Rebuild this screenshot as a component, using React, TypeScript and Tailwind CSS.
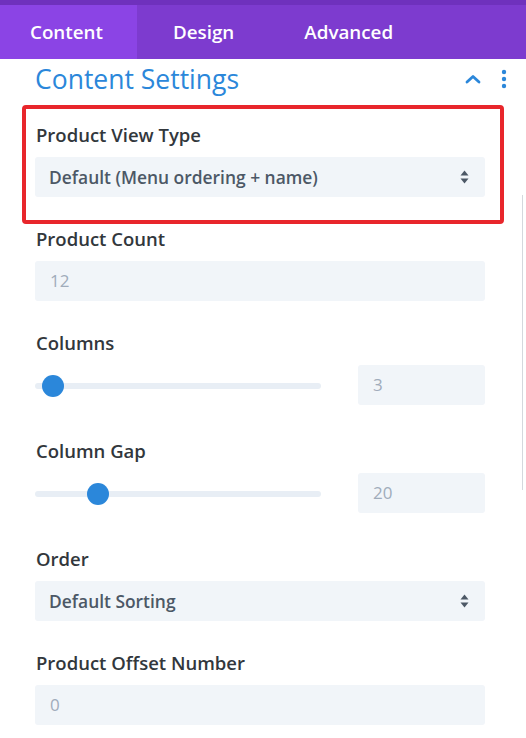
import React from 'react'

const font = { fontFamily: '"Open Sans", "Noto Sans", sans-serif' }

function Label({ children }: { children: React.ReactNode }) {
  return <div className="h-6 leading-6 text-[18.5px] font-semibold text-[#32373c] pl-[1px]">{children}</div>
}

function SelectBox({ value }: { value: string }) {
  return (
    <div className="mt-[10px] h-[40px] w-[450px] rounded-[3px] bg-[#f1f5f9] flex items-center justify-between pl-[14px] pr-[16px]">
      <span className="text-[17.4px] font-semibold text-[#4c5866]">{value}</span>
      <svg width="9" height="14" viewBox="0 0 9 14">
        <path d="M4.5 0.5 L8.5 5.5 H0.5 Z" fill="#4c5866" />
        <path d="M4.5 13.5 L8.5 8.5 H0.5 Z" fill="#4c5866" />
      </svg>
    </div>
  )
}

function InputBox({ value, wide = true }: { value: string; wide?: boolean }) {
  return (
    <div
      className={`h-[40px] rounded-[3px] bg-[#f1f5f9] flex items-center pl-[15px] text-[17px] text-[#a0acbb] ${
        wide ? 'w-[450px] mt-[10px]' : 'w-[127px]'
      }`}
    >
      {value}
    </div>
  )
}

function Slider({ value, pos }: { value: string; pos: number }) {
  return (
    <div className="mt-[10px] h-[40px] flex items-center">
      <div className="relative w-[286px] h-[6px] mt-[2px] rounded-full bg-[#e8eef5]">
        <div
          className="absolute top-1/2 w-[22px] h-[22px] -mt-[11px] -ml-[11px] rounded-full bg-[#2b87da]"
          style={{ left: pos }}
        />
      </div>
      <div className="ml-[37px]">
        <InputBox value={value} wide={false} />
      </div>
    </div>
  )
}

export default function App() {
  return (
    <div className="relative w-[526px] h-[738px] overflow-hidden bg-white" style={font}>
      {/* Tabs */}
      <div className="h-[5px] bg-[#6f31bd]" />
      <div className="h-[54px] flex bg-[#7d3bcf] text-[18.8px] font-semibold text-white">
        <div className="w-[137px] bg-[#8b44e5] flex items-center pl-[30px]">Content</div>
        <div className="flex items-center pl-[36px]">Design</div>
        <div className="flex items-center pl-[70px]">Advanced</div>
      </div>

      {/* Header */}
      <div className="h-[40px] flex items-center pl-[35px] pr-[19px]">
        <span className="text-[26.5px] text-[#2b87da] leading-8">Content Settings</span>
        <div className="ml-auto flex items-center">
          <svg width="16" height="10" viewBox="0 0 16 10" className="mr-[20px]">
            <path d="M2 8 L8 2.5 L14 8" fill="none" stroke="#2b87da" strokeWidth="2.8" strokeLinecap="round" strokeLinejoin="round" />
          </svg>
          <svg width="6" height="20" viewBox="0 0 6 20">
            <circle cx="3" cy="3" r="2.2" fill="#2b87da" />
            <circle cx="3" cy="10" r="2.2" fill="#2b87da" />
            <circle cx="3" cy="17" r="2.2" fill="#2b87da" />
          </svg>
        </div>
      </div>

      {/* Highlighted field */}
      <div className="ml-[22px] mt-[6px] w-[482px] h-[119px] border-4 border-[#e8262b] rounded-[4px] pl-[9px] pt-[14px]">
        <Label>Product View Type</Label>
        <SelectBox value="Default (Menu ordering + name)" />
      </div>

      <div className="pl-[35px]">
        <div className="mt-[3px]">
          <Label>Product Count</Label>
          <InputBox value="12" />
        </div>
        <div className="mt-[30px]">
          <Label>Columns</Label>
          <Slider value="3" pos={18} />
        </div>
        <div className="mt-[34px]">
          <Label>Column Gap</Label>
          <Slider value="20" pos={63} />
        </div>
        <div className="mt-[34px]">
          <Label>Order</Label>
          <SelectBox value="Default Sorting" />
        </div>
        <div className="mt-[30px]">
          <Label>Product Offset Number</Label>
          <InputBox value="0" />
        </div>
      </div>

      {/* scrollbar hint */}
      <div className="absolute right-[3px] top-[195px] w-px h-[295px] bg-[#d4d8dd]" />
    </div>
  )
}
